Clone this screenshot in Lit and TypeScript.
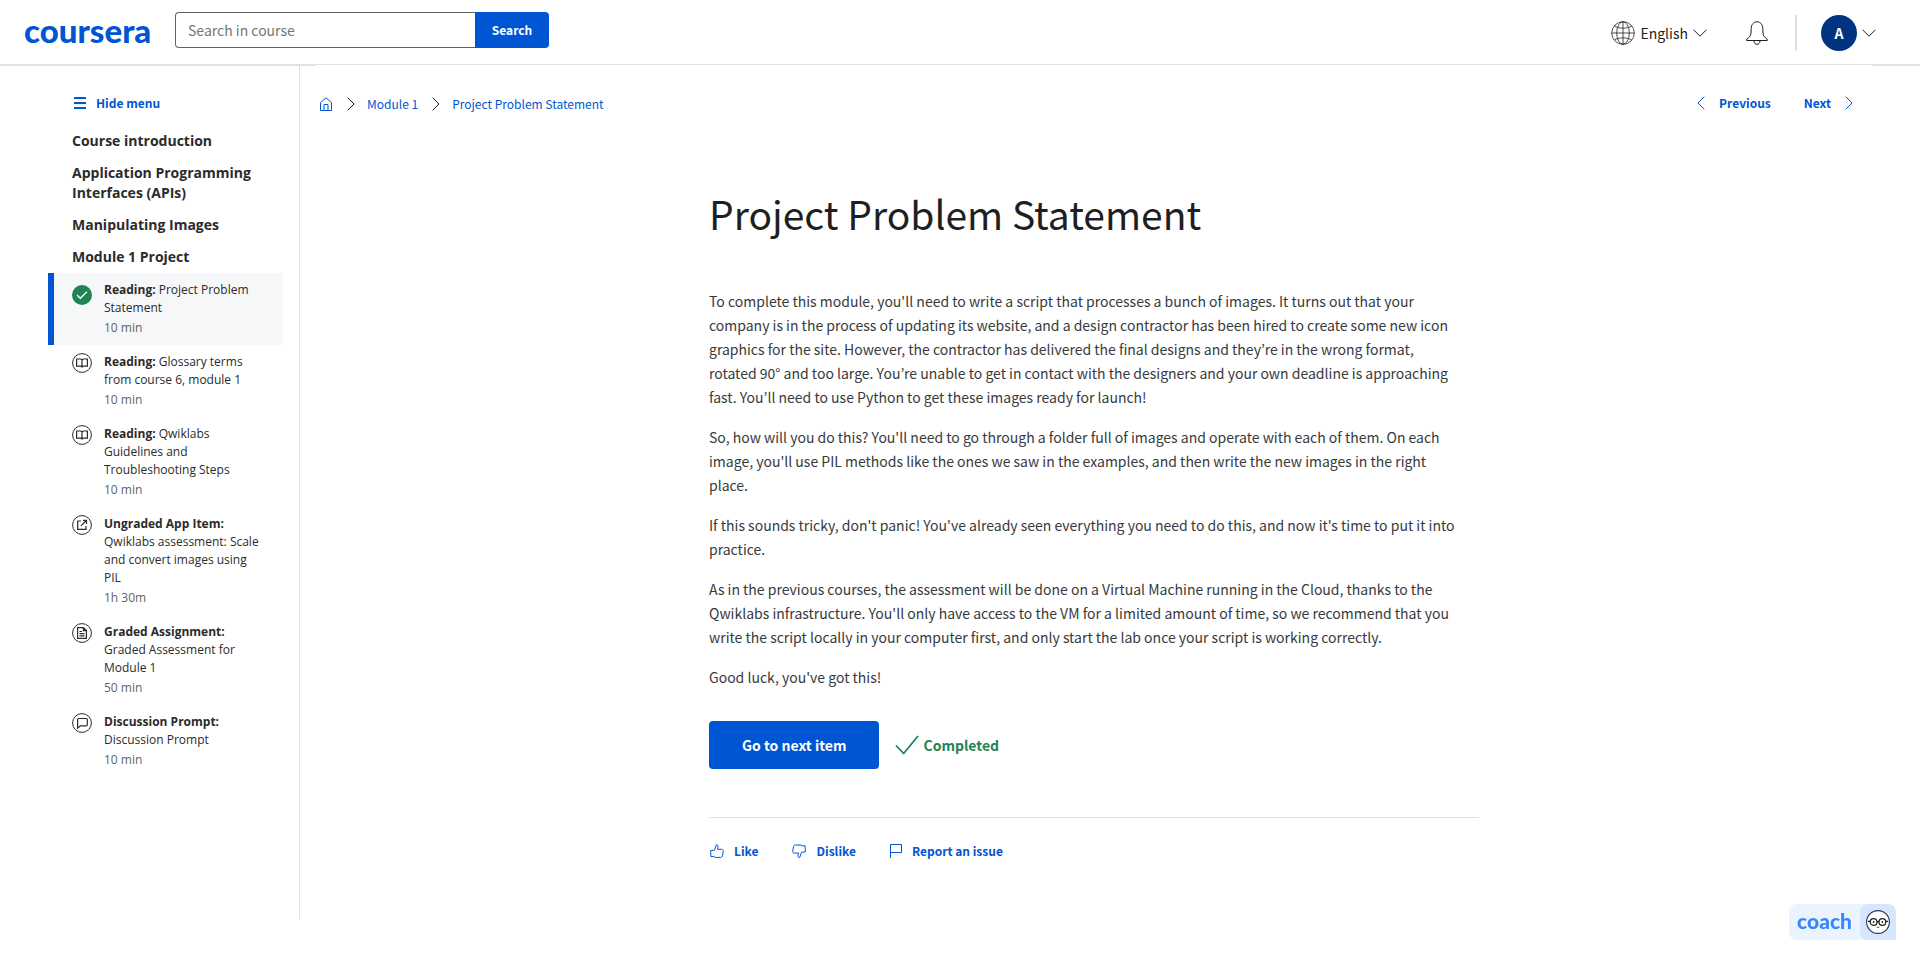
import { LitElement, html, css, svg } from "lit";
import { customElement, property } from "lit/decorators.js";
import { classMap } from "lit/directives/class-map.js";

type IconName =
  | "menu" | "home" | "right" | "left" | "down" | "globe" | "bell" | "check"
  | "done" | "book" | "external" | "document" | "chat" | "like" | "dislike" | "flag" | "face";

const icons: Record<IconName, { w: number; h: number; body: unknown }> = {
  menu: { w: 12, h: 12, body: svg`<path d="M0 1h12M0 6h12M0 11h12" stroke-width="2"/>` },
  home: {
    w: 14, h: 14,
    body: svg`<path d="M1.5 5.5 7 .8l5.500 4.700v8h-11z"/><path d="M5 13.500V7.500h4v6"/>`,
  },
  right: { w: 8, h: 14, body: svg`<path d="M.7.7 7 7 .7 13.300"/>` },
  left: { w: 8, h: 14, body: svg`<path d="M7.300.7 1 7l6.300 6.300"/>` },
  down: { w: 14, h: 8, body: svg`<path d="M.5.7 7 7.200 13.500.7"/>` },
  globe: {
    w: 24, h: 24,
    body: svg`<g stroke-width=".8"><circle cx="12" cy="12" r="11.300"/><ellipse cx="12" cy="12" rx="6.300" ry="11.300"/>
      <path d="M12 .7v22.600M.7 12h22.600M3.500 5.200c5 2.600 12 2.600 17 0M3.500 18.800c5-2.600 12-2.600 17 0"/></g>`,
  },
  bell: {
    w: 22, h: 24,
    body: svg`<path d="M.7 19.500v-1.300c2.500-1.500 4.100-3.500 4.300-6.200l.2-4.500C5.400 3.400 7.600.8 11 .8s5.600 2.600 5.800 6.700L17 12c.2 2.700 1.800 4.700 4.300 6.200v1.300z"/>
      <path d="M8 20c0 2 1.300 3.300 3 3.300s3-1.300 3-3.300"/>`,
  },
  check: { w: 24, h: 20, body: svg`<path d="m1 10.500 7.700 8L23 1" stroke-width="1.800"/>` },
  done: {
    w: 20, h: 20,
    body: svg`<circle cx="10" cy="10" r="10" fill="#1f8354" stroke="none"/>
      <path d="m5 10 3.300 3.300L15 6.700" stroke="#fff" stroke-width="1.300"/>`,
  },
  book: {
    w: 20, h: 20,
    body: svg`<circle cx="10" cy="10" r="9.400"/>
      <path d="M10 6.800C9.600 6.300 9 6 8.300 6H4.600v7.200h4c.7 0 1.100.3 1.400.8.300-.5.700-.8 1.400-.8h4V6h-3.700c-.7 0-1.300.3-1.700.8zM10 6.800V14" stroke-width="1.200"/>`,
  },
  external: {
    w: 20, h: 20,
    body: svg`<circle cx="10" cy="10" r="9.400"/>
      <path d="M9 6H5.700v8.300H14V11M9 10.800l5.300-5.300M11 5.400h3.500V9" stroke-width="1.200"/>`,
  },
  document: {
    w: 20, h: 20,
    body: svg`<circle cx="10" cy="10" r="9.400"/>
      <path d="M5.600 4.600h5.800l3 3v7.800H5.600zM11.400 4.600v3h3M7.500 8.500H10M7.500 10.700h5M7.500 12.900h5" stroke-width="1.200"/>`,
  },
  chat: {
    w: 20, h: 20,
    body: svg`<circle cx="10" cy="10" r="9.400"/>
      <path d="M6.500 5.500h7.800c.600 0 1 .4 1 1v5.300c0 .6-.4 1-1 1H8.400l-2.800 2.400V6.500c0-.6.3-1 .9-1z" stroke-width="1.200"/>`,
  },
  like: {
    w: 14, h: 14,
    body: svg`<path d="M4.500 6.200 6.300.800c1.400 0 2 1 1.700 2.300l-.6 2.200h4.200c1.200 0 1.900.7 1.700 1.800l-.9 4.800c-.2 1-.8 1.500-1.800 1.500H5.200l-1.500-.9H.9L.7 6.600z"/>`,
  },
  dislike: {
    w: 14, h: 14,
    body: svg`<path d="m9.500 8.300-1.800 5.300c-1.400 0-2-1-1.700-2.300l.6-2.200H2.400C1.200 9.100.500 8.400.7 7.300l.9-4.800C1.800 1.500 2.400 1 3.400 1h5.400l1.500.8h2.800l.2 6.100z"/>`,
  },
  flag: { w: 12, h: 14, body: svg`<path d="M.5 14V.5h11v8H.5"/>` },
  face: {
    w: 24, h: 24,
    body: svg`<circle cx="12" cy="12" r="11.400" fill="#fff" stroke="#2b3350" stroke-width="1.100"/>
      <g stroke="#222" stroke-width="1.300"><circle cx="7.600" cy="12" r="3.400"/><circle cx="16.400" cy="12" r="3.400"/>
      <path d="M11 11.600h2M2 11.300h2.200M19.800 11.300H22"/></g>
      <circle cx="7.600" cy="12" r=".9" fill="#222" stroke="none"/><circle cx="16.400" cy="12" r=".9" fill="#222" stroke="none"/>
      <path d="M10.700 17c.9.500 1.700.5 2.600 0" stroke="#222" stroke-width=".9"/>`,
  },
};

@customElement("ui-icon")
class UiIcon extends LitElement {
  @property() name: IconName = "menu";

  static styles = css`
    :host { display: inline-flex; flex: none; }
    .glyph { display: block; fill: none; stroke: currentColor; stroke-width: 1; }
  `;

  render() {
    const icon = icons[this.name];
    return html`<svg class="glyph" width=${icon.w} height=${icon.h} viewBox="0 0 ${icon.w} ${icon.h}" aria-hidden="true">${icon.body}</svg>`;
  }
}

interface CourseItem {
  icon: IconName;
  kind: string;
  title: string;
  time: string;
  active?: boolean;
}

const lessons = ["Course introduction", "Application Programming Interfaces (APIs)", "Manipulating Images", "Module 1 Project"];

const items: CourseItem[] = [
  { icon: "done", kind: "Reading:", title: "Project Problem Statement", time: "10 min", active: true },
  { icon: "book", kind: "Reading:", title: "Glossary terms from course 6, module 1", time: "10 min" },
  { icon: "book", kind: "Reading:", title: "Qwiklabs Guidelines and Troubleshooting Steps", time: "10 min" },
  { icon: "external", kind: "Ungraded App Item:", title: "Qwiklabs assessment: Scale and convert images using PIL", time: "1h 30m" },
  { icon: "document", kind: "Graded Assignment:", title: "Graded Assessment for Module 1", time: "50 min" },
  { icon: "chat", kind: "Discussion Prompt:", title: "Discussion Prompt", time: "10 min" },
];

const paragraphs = [
  "To complete this module, you'll need to write a script that processes a bunch of images. It turns out that your company is in the process of updating its website, and a design contractor has been hired to create some new icon graphics for the site. However, the contractor has delivered the final designs and they’re in the wrong format, rotated 90° and too large. You’re unable to get in contact with the designers and your own deadline is approaching fast. You’ll need to use Python to get these images ready for launch!",
  "So, how will you do this? You'll need to go through a folder full of images and operate with each of them. On each image, you'll use PIL methods like the ones we saw in the examples, and then write the new images in the right place.",
  "If this sounds tricky, don't panic! You've already seen everything you need to do this, and now it's time to put it into practice.",
  "As in the previous courses, the assessment will be done on a Virtual Machine running in the Cloud, thanks to the Qwiklabs infrastructure. You'll only have access to the VM for a limited amount of time, so we recommend that you write the script locally in your computer first, and only start the lab once your script is working correctly.",
  "Good luck, you've got this!",
];

@customElement("app-root")
class AppRoot extends LitElement {
  static styles = css`
    :host {
      display: flex;
      flex-direction: column;
      box-sizing: border-box;
      min-height: 100vh;
      padding-bottom: 45px;
      background: #fff;
      color: #1f1f1f;
      font-family: "Source Sans Pro", "Noto Sans CJK KR", sans-serif;
      font-size: 14px;
      line-height: 24px;
    }
    * { box-sizing: border-box; }
    a { color: #0056d2; text-decoration: none; }
    button { border: 0; padding: 0; background: none; color: #0056d2; font: inherit; cursor: pointer; }

    .topbar {
      display: flex;
      align-items: center;
      justify-content: space-between;
      height: 65px;
      padding: 0 44px 0 24px;
      border-bottom: 1px solid #e1e1e1;
    }
    .start, .end { display: flex; align-items: center; }
    .start { gap: 24px; padding-bottom: 4px; }
    .end { color: #1f1f1f; padding-top: 2px; }
    .logo { font: 900 33px/36px Lato, sans-serif; width: 127px; }
    .search { display: flex; }
    .query {
      width: 300px;
      height: 36px;
      padding: 0 12px;
      border: 1px solid #636363;
      border-radius: 4px 0 0 4px;
      border-right: 0;
      font: inherit;
      color: #1f1f1f;
    }
    .query::placeholder { color: #757575; opacity: 1; }
    .go { width: 74px; border-radius: 0 4px 4px 0; background: #0056d2; color: #fff; font-size: 12px; font-weight: 700; }
    .lang { display: flex; align-items: center; gap: 5px; color: #1f1f1f; }
    .bell { display: flex; margin: 0 27px 0 39px; color: #1f1f1f; }
    .split { width: 2px; height: 36px; background: #e1e1e1; }
    .account { display: flex; align-items: center; gap: 5px; margin-left: 24px; color: #1f1f1f; }
    .avatar { width: 36px; height: 36px; border-radius: 50%; background: #003380; color: #fff; font-weight: 700; line-height: 36px; text-align: center; }

    .edge { display: flex; justify-content: space-between; height: 1px; }
    .edge-start { width: 316px; background: #e1e1e1; }
    .edge-end { width: 48px; background: #e1e1e1; }

    .body { display: flex; flex: 1; }
    .sidebar { width: 300px; flex: none; padding: 25px 16px 0 48px; border-right: 1px solid #e1e1e1; font-family: "Open Sans", sans-serif; }
    .hide { display: flex; align-items: center; gap: 10px; margin-left: 26px; font: 700 12px/24px "Source Sans Pro", "Noto Sans CJK KR", sans-serif; }
    .lessons { padding: 10px 24px 0; }
    .lesson { display: block; padding: 6px 0; color: #2b2b2b; font-size: 14px; font-weight: 700; line-height: 20px; }
    .items { margin: 0; padding: 0; list-style: none; }
    .item { display: flex; gap: 12px; padding: 8px 20px 8px 18px; border-left: 6px solid transparent; color: #2b2b2b; font-size: 12px; line-height: 18px; }
    .item.active { border-color: #0056d2; background: #f5f7f8; }
    .item.active .mark { padding-top: 4px; }
    .mark { display: flex; align-items: flex-start; }
    .kind { font-weight: 700; }
    .time { display: block; margin-top: 2px; color: #636363; }

    .main { flex: 1; min-width: 0; margin: 0 48px 0 16px; }
    .nav { display: flex; align-items: center; justify-content: space-between; padding: 25px 19px 0 3px; font-size: 12px; }
    .crumbs { display: flex; align-items: center; }
    .crumbs .sep { display: flex; margin: 0 12px 0 14px; color: #1f1f1f; }
    .home { display: flex; }
    .pager { display: flex; gap: 33px; font-weight: 700; padding-bottom: 2px; }
    .step { display: flex; align-items: center; gap: 14px; }

    .article { max-width: 770px; margin: 0 auto; padding-top: 70px; }
    .title { margin: 0 0 50px; font-size: 39px; font-weight: 400; line-height: 52px; }
    .text { margin: 0 0 16px; padding-right: 18px; color: #373a3c; }
    .actions { display: flex; align-items: center; gap: 16px; padding: 16px 0 48px; border-bottom: 1px solid #e1e1e1; }
    .next { height: 48px; padding: 0 33px; border-radius: 4px; background: #0056d2; color: #fff; font-weight: 700; }
    .completed { display: flex; align-items: center; gap: 4px; color: #1f8354; font-weight: 700; }
    .feedback { display: flex; gap: 34px; padding: 21px 1px 0; font-size: 12px; font-weight: 700; }
    .vote { display: flex; align-items: center; gap: 10px; }

    .coach {
      position: fixed;
      right: 24px;
      bottom: 24px;
      display: flex;
      height: 36px;
      border-radius: 8px 8px 0 8px;
      overflow: hidden;
      background: #ebf3ff;
    }
    .coach-name { width: 71px; color: #3587fc; font: 900 21px/34px Lato, sans-serif; text-align: center; }
    .coach-face { display: flex; align-items: center; justify-content: center; width: 36px; height: 36px; border-radius: 8px 8px 0 8px; background: #d6e6ff; }
  `;

  render() {
    return html`
      <header class="topbar">
        <div class="start">
          <a class="logo" href="#">coursera</a>
          <form class="search" role="search">
            <input class="query" type="text" placeholder="Search in course" aria-label="Search in course" />
            <button class="go" type="button">Search</button>
          </form>
        </div>
        <div class="end">
          <button class="lang"><ui-icon name="globe"></ui-icon><span>English</span><ui-icon name="down"></ui-icon></button>
          <button class="bell" aria-label="Notifications"><ui-icon name="bell"></ui-icon></button>
          <span class="split"></span>
          <button class="account" aria-label="Account"><span class="avatar">A</span><ui-icon name="down"></ui-icon></button>
        </div>
      </header>
      <div class="edge"><span class="edge-start"></span><span class="edge-end"></span></div>
      <div class="body">
        <aside class="sidebar">
          <button class="hide"><ui-icon name="menu"></ui-icon><span>Hide menu</span></button>
          <nav class="lessons">${lessons.map((name) => html`<a class="lesson" href="#">${name}</a>`)}</nav>
          <ul class="items">
            ${items.map(
              (item) => html`<li>
                <a class=${classMap({ item: true, active: !!item.active })} href="#">
                  <span class="mark"><ui-icon name=${item.icon}></ui-icon></span>
                  <span><span class="kind">${item.kind}</span> ${item.title}<span class="time">${item.time}</span></span>
                </a>
              </li>`
            )}
          </ul>
        </aside>
        <main class="main">
          <div class="nav">
            <nav class="crumbs" aria-label="Breadcrumb">
              <a class="home" href="#" aria-label="Home"><ui-icon name="home"></ui-icon></a>
              <span class="sep"><ui-icon name="right"></ui-icon></span>
              <a href="#">Module 1</a>
              <span class="sep"><ui-icon name="right"></ui-icon></span>
              <a href="#">Project Problem Statement</a>
            </nav>
            <nav class="pager" aria-label="Items">
              <a class="step" href="#"><ui-icon name="left"></ui-icon>Previous</a>
              <a class="step" href="#">Next<ui-icon name="right"></ui-icon></a>
            </nav>
          </div>
          <article class="article">
            <h1 class="title">Project Problem Statement</h1>
            ${paragraphs.map((text) => html`<p class="text">${text}</p>`)}
            <div class="actions">
              <button class="next">Go to next item</button>
              <span class="completed"><ui-icon name="check"></ui-icon>Completed</span>
            </div>
            <div class="feedback">
              <button class="vote"><ui-icon name="like"></ui-icon>Like</button>
              <button class="vote"><ui-icon name="dislike"></ui-icon>Dislike</button>
              <button class="vote"><ui-icon name="flag"></ui-icon>Report an issue</button>
            </div>
          </article>
        </main>
      </div>
      <button class="coach" aria-label="Open coach">
        <span class="coach-name">coach</span>
        <span class="coach-face"><ui-icon name="face"></ui-icon></span>
      </button>
    `;
  }
}
